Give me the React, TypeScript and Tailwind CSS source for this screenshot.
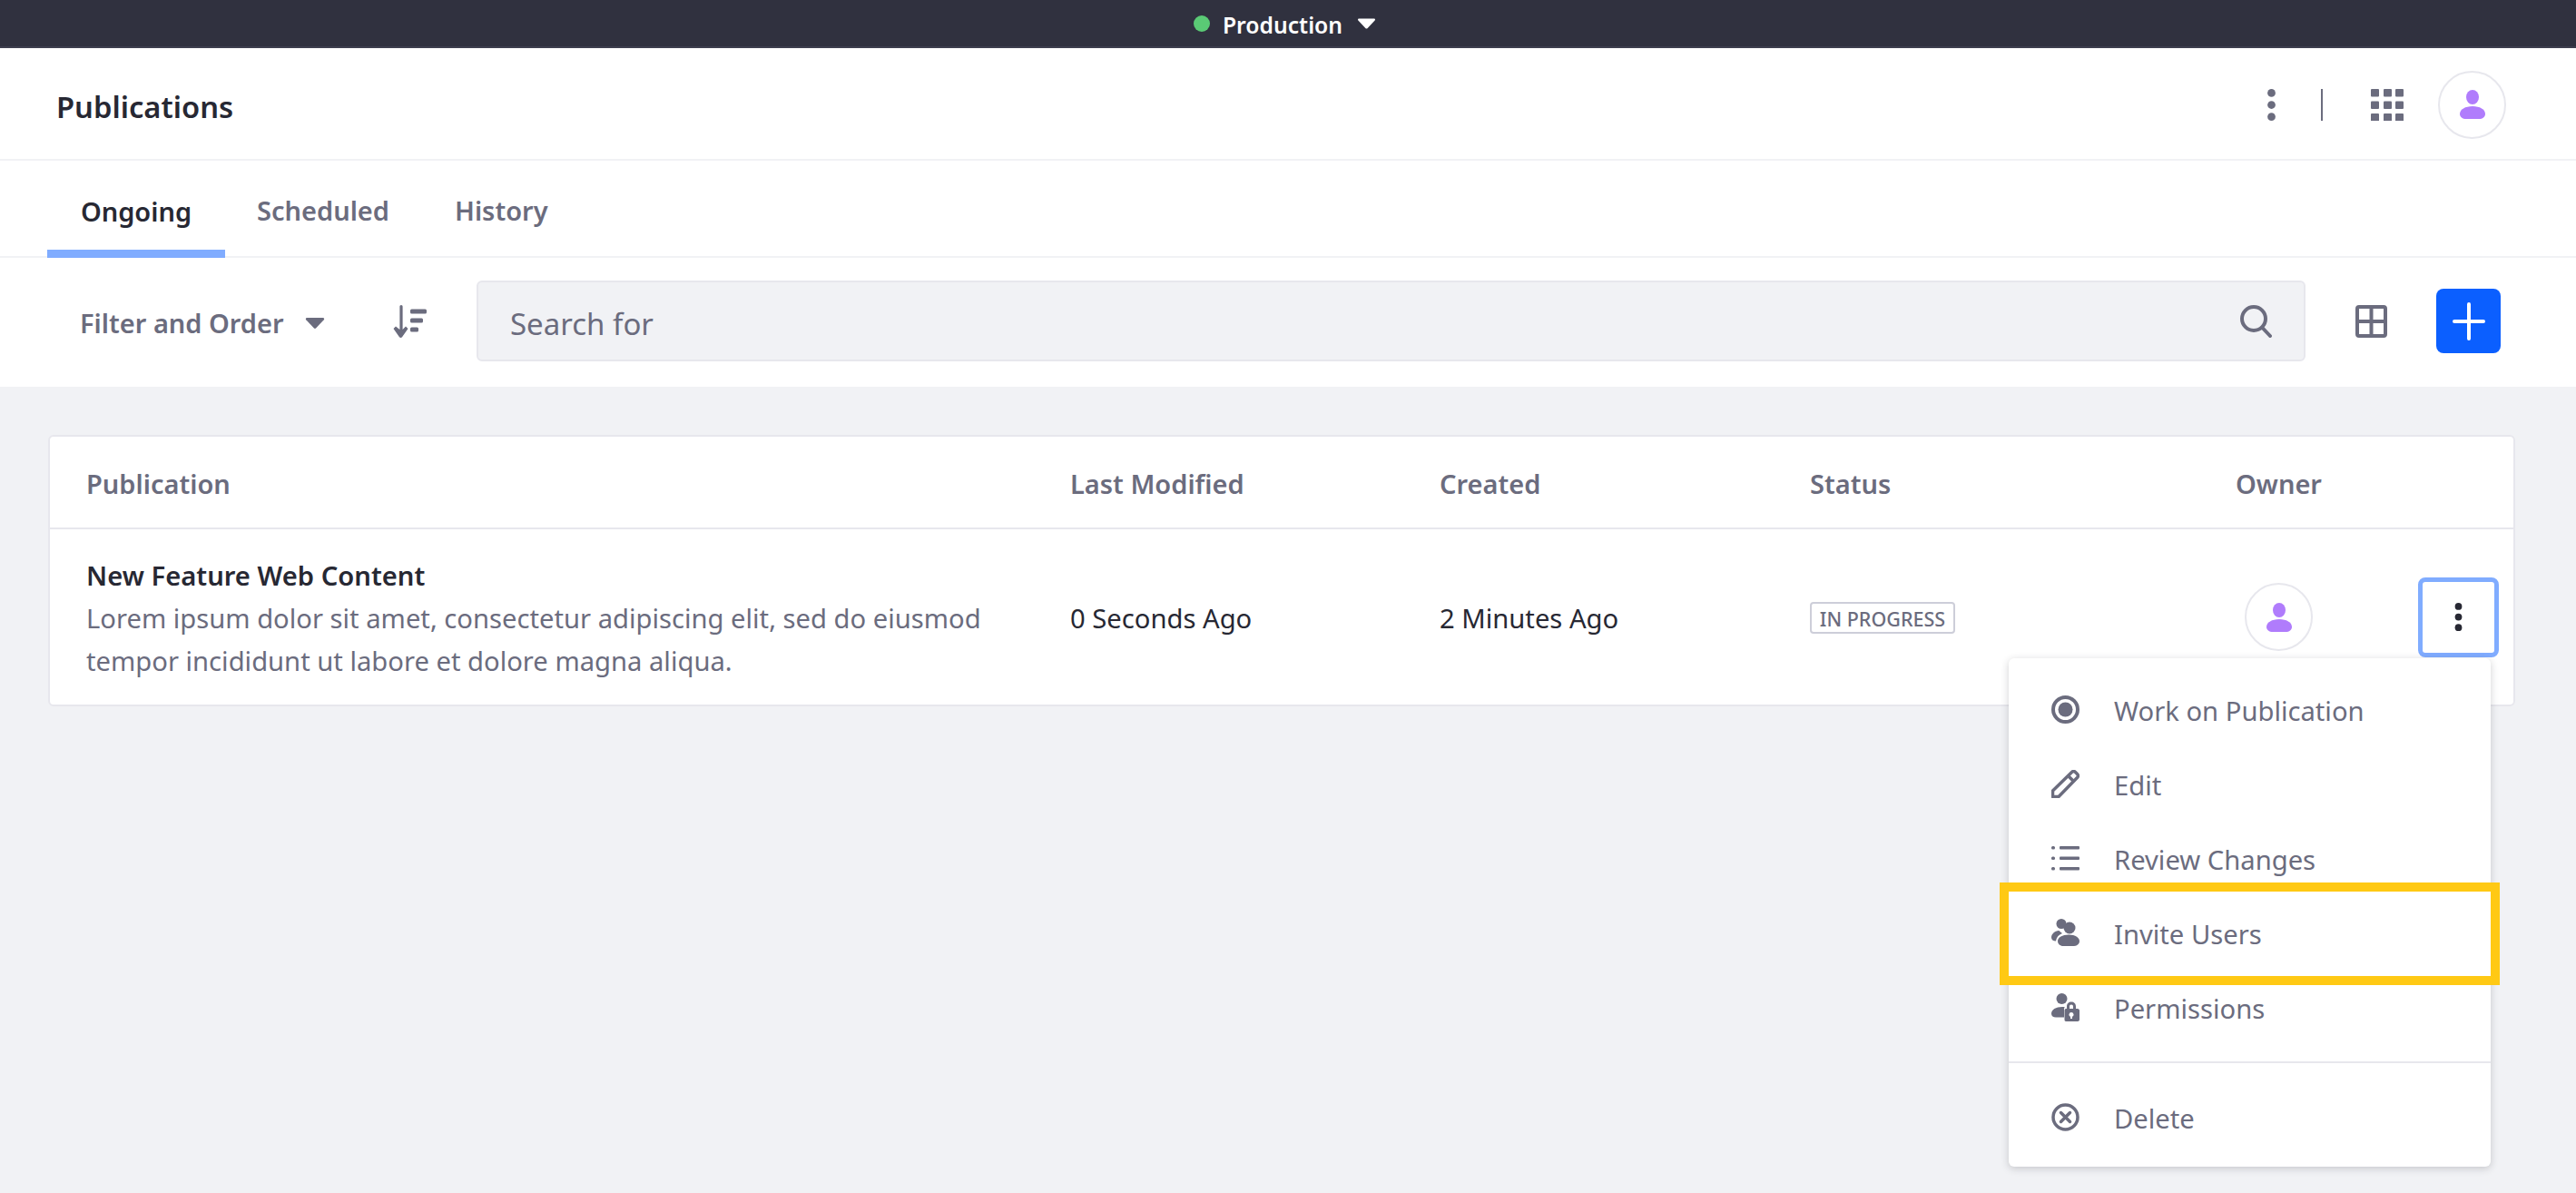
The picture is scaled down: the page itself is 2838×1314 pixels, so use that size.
import React from 'react';

const FONT = 'font-["Noto_Sans",sans-serif]';

const Kebab: React.FC<{ className?: string }> = ({ className }) => (
  <svg viewBox="0 0 9 36" className={className} fill="currentColor">
    <ellipse cx="4.5" cy="4.5" rx="4.5" ry="4.5" />
    <ellipse cx="4.5" cy="18" rx="4.5" ry="4.5" />
    <ellipse cx="4.5" cy="31.5" rx="4.5" ry="4.5" />
  </svg>
);

const Avatar: React.FC = () => (
  <div className="flex h-[75px] w-[75px] items-center justify-center rounded-full border-2 border-[#e7e7ed] bg-white">
    <svg viewBox="0 0 28 32" className="h-[32px] w-[28px]" fill="#b07cfc">
      <ellipse cx="14" cy="8" rx="7" ry="8" />
      <path d="M14 18c8 0 14 3.500 14 8.500 0 3.500-3 5.500-7 5.500H7c-4 0-7-2-7-5.500C0 21.500 6 18 14 18z" />
    </svg>
  </div>
);

const Caret: React.FC<{ className?: string }> = ({ className }) => (
  <svg viewBox="0 0 22 13" className={className} fill="currentColor">
    <path d="M1.500 0h19c1.300 0 2 1.500 1.100 2.500l-9.500 10c-.6.600-1.600.600-2.200 0L.4 2.500C-.5 1.500.2 0 1.500 0z" />
  </svg>
);

const menuIcon = 'h-[31px] w-[31px] shrink-0 text-[#6b6c7e]';

const menuItems: { label: string; icon: React.ReactNode }[] = [
  {
    label: 'Work on Publication',
    icon: (
      <svg viewBox="0 0 31 31" className={menuIcon} fill="none" stroke="currentColor">
        <circle cx="15.500" cy="15.500" r="13.500" strokeWidth="4" />
        <circle cx="15.500" cy="15.500" r="8" fill="currentColor" stroke="none" />
      </svg>
    ),
  },
  {
    label: 'Edit',
    icon: (
      <svg viewBox="0 0 31 31" className={menuIcon} fill="none" stroke="currentColor" strokeWidth="3.500" strokeLinejoin="round">
        <path d="M1.500 29.500v-6.500L22.500 2.500c1.200-1.200 2.800-1.200 4 0l2 2c1.200 1.200 1.200 2.800 0 4L8 29.500H1.500z" />
        <path d="M18.500 6.500l6 6" />
      </svg>
    ),
  },
  {
    label: 'Review Changes',
    icon: (
      <svg viewBox="0 0 31 31" className={menuIcon} fill="currentColor">
        <rect x="0" y="2" width="4" height="3.500" rx="1.500" />
        <rect x="9" y="2" width="22" height="3.500" rx="1" />
        <rect x="0" y="13.500" width="4" height="3.500" rx="1.500" />
        <rect x="9" y="13.500" width="22" height="3.500" rx="1" />
        <rect x="0" y="25" width="4" height="3.500" rx="1.500" />
        <rect x="9" y="25" width="22" height="3.500" rx="1" />
      </svg>
    ),
  },
  {
    label: 'Invite Users',
    icon: (
      <svg viewBox="0 0 31 31" className={menuIcon} fill="currentColor">
        <circle cx="11" cy="5.500" r="5.500" />
        <circle cx="20" cy="10" r="6.500" />
        <path d="M8.500 13c-5 .5-8.500 3.800-8.500 7.500 0 2.500 2 4 5 4 .5-4 3-7 7-8.500-1.200-.8-2.800-2-3.500-3z" />
        <path d="M19 17.500c6.800 0 12 3 12 7 0 3-2.500 5.500-6 5.500H13c-3.500 0-6-2.500-6-5.500 0-4 5.200-7 12-7z" />
      </svg>
    ),
  },
  {
    label: 'Permissions',
    icon: (
      <svg viewBox="0 0 31 31" className={menuIcon} fill="currentColor">
        <circle cx="11.500" cy="6" r="6" />
        <path d="M12 15c-7 0-12 3-12 7.500 0 2.500 2 4 5 4h9v-9c0-1 .3-1.800.8-2.300-.9-.1-1.800-.2-2.800-.2z" />
        <path fillRule="evenodd" d="M17 17v-2.500c0-3 2-5 5-5s5 2 5 5V17h2c1 0 2 1 2 2v10c0 1-1 2-2 2H16c-1 0-1.500-1-1.500-2V19c0-1 .5-2 1.500-2h1zm3 0h4v-2.500c0-1.300-.8-2-2-2s-2 .7-2 2V17zm2 4a2.500 2.500 0 0 0-1 4.800V28h2v-2.200A2.500 2.500 0 0 0 22 21z" />
      </svg>
    ),
  },
];

const App: React.FC = () => {
  return (
    <div className={`relative h-[1314px] w-[2838px] overflow-hidden bg-[#f1f2f5] ${FONT}`}>
      {/* Environment bar */}
      <div className="flex h-[53px] items-center justify-center border-b-2 border-[#3d3e4e] bg-[#30313f] pr-[8px] pt-[1px]">
        <span className="h-[18px] w-[18px] rounded-full bg-[#5aca75]" />
        <span className="ml-[14px] pt-[3px] text-[24.7px] font-semibold text-white">Production</span>
        <Caret className="ml-[17px] h-[12px] w-[19px] text-white" />
      </div>

      {/* Title bar */}
      <div className="flex h-[124px] items-center border-b-2 border-[#f1f2f5] bg-white pl-[62px] pr-[77px] pt-[2px]">
        <h1 className="flex-1 pt-[6px] text-[32.7px] font-semibold text-[#272833]">Publications</h1>
        <Kebab className="h-[35px] w-[9px] text-[#6b6c7e]" />
        <span className="ml-[50px] h-[35px] w-[2px] bg-[#6b6c7e]" />
        <svg viewBox="0 0 36 35" className="ml-[53px] h-[35px] w-[36px]" fill="#6b6c7e">
          {[0, 14, 27].map((x) =>
            [0, 13.500, 27].map((y) => <rect key={`${x}-${y}`} x={x} y={y} width="9" height="8.500" rx="1" />),
          )}
        </svg>
        <div className="ml-[38px]">
          <Avatar />
        </div>
      </div>

      {/* Tabs */}
      <div className="flex h-[107px] items-stretch border-b-2 border-[#f1f2f5] bg-white pl-[52px]">
        <div className="mb-[-2px] flex w-[196px] items-center justify-center border-b-[9px] border-[#80acff] pt-[13px] text-[29px] font-semibold text-[#272833]">Ongoing</div>
        <div className="flex items-center pl-[35px] pr-[36px] pt-[4px] text-[29px] font-semibold text-[#6b6c7e]">Scheduled</div>
        <div className="flex items-center px-[36px] pt-[4px] text-[29px] font-semibold text-[#6b6c7e]">History</div>
      </div>

      {/* Management toolbar */}
      <div className="flex h-[142px] items-center bg-white pb-[3px] pl-[88px] pr-[83px]">
        <span className="w-[223px] whitespace-nowrap pt-[5px] text-[29px] font-semibold text-[#6b6c7e]">Filter and Order</span>
        <Caret className="ml-[25px] mt-[5px] h-[12px] w-[22px] text-[#6b6c7e]" />
        <svg viewBox="0 0 37 36" className="ml-[75px] h-[36px] w-[37px]" fill="#6b6c7e">
          <path d="M9 0c1 0 1.600.8 1.600 1.800V27l3.400-3.400 2.500 2.300-6.300 9.200c-.9 1.200-2.500 1.200-3.400 0L.5 25.900 3 23.600 7.400 27V1.800C7.400.8 8 0 9 0z" />
          <rect x="19" y="4.500" width="18" height="5" rx="1.500" />
          <rect x="19" y="14.500" width="14" height="5" rx="1.500" />
          <rect x="19" y="24.500" width="9" height="5" rx="1.500" />
        </svg>
        <div className="ml-[55px] flex h-[89px] flex-1 items-center justify-between rounded-[6px] border-2 border-[#e7e7ed] bg-[#f1f2f5] pl-[35px] pr-[35px]">
          <span className="pt-[6px] text-[33px] text-[#6b6c7e]">Search for</span>
          <svg viewBox="0 0 35 36" className="h-[36px] w-[35px]" fill="none" stroke="#6b6c7e" strokeWidth="4" strokeLinecap="round">
            <circle cx="15" cy="15" r="13" />
            <path d="M24.500 25l8.500 9" />
          </svg>
        </div>
        <svg viewBox="0 0 35 36" className="ml-[55px] h-[36px] w-[35px]" fill="none" stroke="#6b6c7e" strokeWidth="4">
          <rect x="2" y="2" width="31" height="32" rx="2" />
          <path d="M17.500 2v32M2 18h31" />
        </svg>
        <button className="ml-[54px] flex h-[71px] w-[71px] items-center justify-center rounded-[8px] bg-[#0b5fff]">
          <svg viewBox="0 0 36 42" className="h-[42px] w-[36px]" stroke="white" strokeWidth="4" strokeLinecap="round">
            <path d="M18 2v38M2 21h32" />
          </svg>
        </button>
      </div>

      {/* Publications table */}
      <div className="ml-[53px] mr-[67px] mt-[53px] overflow-hidden rounded-[6px] border-2 border-[#e7e7ed] bg-white">
        <div className="grid h-[102px] grid-cols-[1084px_407px_408px_469px_1fr] items-center border-b-2 border-[#e7e7ed] pl-[40px] pt-[3px] text-[29px] font-semibold text-[#6b6c7e]">
          <div>Publication</div>
          <div>Last Modified</div>
          <div>Created</div>
          <div>Status</div>
          <div>Owner</div>
        </div>
        <div className="grid h-[193px] grid-cols-[1084px_407px_408px_479px_1fr] items-center pl-[40px] text-[29.2px] text-[#272833]">
          <div className="pt-[3px]">
            <div className="font-semibold leading-[47px]">New Feature Web Content</div>
            <div className="leading-[47px] text-[#6b6c7e]">
              Lorem ipsum dolor sit amet, consectetur adipiscing elit, sed do eiusmod
              <br />
              tempor incididunt ut labore et dolore magna aliqua.
            </div>
          </div>
          <div className="pt-[4px]">0 Seconds Ago</div>
          <div className="pt-[4px]">2 Minutes Ago</div>
          <div>
            <span className="inline-flex h-[35px] w-[160px] items-center justify-center rounded-[4px] border-2 border-[#cdced9] pt-[2px] text-[21.5px] font-medium text-[#6b6c7e]">
              IN PROGRESS
            </span>
          </div>
          <div className="flex items-center">
            <Avatar />
            <button className="ml-[116px] flex h-[88px] w-[89px] items-center justify-center rounded-[8px] border-[5px] border-[#80acff] bg-white">
              <Kebab className="h-[31px] w-[9px] text-[#272833]" />
            </button>
          </div>
        </div>
      </div>

      {/* Open dropdown */}
      <div className="absolute left-[2213px] top-[725px] w-[531px] rounded-[6px] bg-white pt-[15px] text-[29.2px] text-[#6b6c7e] shadow-[0_2px_8px_rgba(39,40,51,0.22)]">
        {menuItems.map((item) => (
          <div key={item.label} className="flex h-[82px] items-center pl-[47px]">
            {item.icon}
            <span className="ml-[38px] pt-[6px]">{item.label}</span>
          </div>
        ))}
        <div className="mt-[19px] border-t-2 border-[#e7e7ed] pb-[14px] pt-[18px]">
          <div className="flex h-[82px] items-center pl-[47px]">
            <svg viewBox="0 0 31 31" className={menuIcon} fill="none" stroke="currentColor" strokeWidth="3.500" strokeLinecap="round">
              <circle cx="15.500" cy="15.500" r="13.500" />
              <path d="M10.500 10.500l10 10M20.500 10.500l-10 10" />
            </svg>
            <span className="ml-[38px] pt-[6px]">Delete</span>
          </div>
        </div>
      </div>

      {/* Callout around Invite Users */}
      <div className="absolute left-[2203px] top-[972px] h-[113px] w-[551px] border-[10px] border-[#ffc914]" />
    </div>
  );
};

export default App;
